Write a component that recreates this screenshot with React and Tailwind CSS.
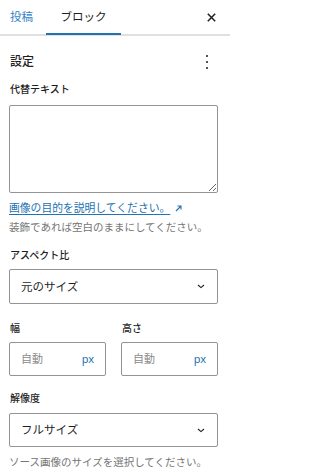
import React from "react";

const font = { fontFamily: '"Noto Sans", "Noto Sans CJK JP", sans-serif' };

function Chevron() {
  return (
    <svg width="8" height="5" viewBox="0 0 8 5" className="shrink-0">
      <path d="M1 1 L4 3.6 L7 1" fill="none" stroke="#1e1e1e" strokeWidth="1.1" />
    </svg>
  );
}

function SelectBox({ text, className }) {
  return (
    <div
      className={
        "flex h-[35px] items-center justify-between rounded-[2px] border border-[#949494] bg-white pl-[11px] pr-[12px] text-[11.5px] text-[#1e1e1e] " +
        (className || "")
      }
    >
      <span className="leading-[16px]">{text}</span>
      <Chevron />
    </div>
  );
}

function UnitInput() {
  return (
    <div className="flex h-[34px] flex-1 items-center justify-between rounded-[2px] border border-[#949494] bg-white pl-[11px] pr-[11px]">
      <span className="text-[11px] leading-[16px] text-[#8a8a8a]">自動</span>
      <span className="text-[11px] leading-[16px] text-[#2271b1]">px</span>
    </div>
  );
}

export default function App() {
  return (
    <div className="w-[230px] h-[474px] overflow-hidden bg-white text-[#1e1e1e]" style={font}>
      <div className="flex h-[36px] items-stretch border-b-2 border-[#e0e0e0]">
        <div className="flex w-[46px] items-center pl-[10px] text-[11.5px] leading-[16px] text-[#3582c4]">
          投稿
        </div>
        <div className="relative flex w-[75px] items-center justify-center text-[11.5px] leading-[16px] text-[#1e1e1e]">
          ブロック
          <div className="absolute bottom-[-1px] left-0 right-0 h-[2px] bg-[#2271b1]" />
        </div>
        <div className="flex-1" />
        <div className="flex w-[36px] items-center justify-center pr-[2px]">
          <svg width="9" height="9" viewBox="0 0 9 9">
            <path d="M0.8 0.8 L8.2 8.2 M8.2 0.8 L0.8 8.2" stroke="#1e1e1e" strokeWidth="1.5" />
          </svg>
        </div>
      </div>

      <div className="pl-[9px] pr-[12px]">
        <div className="mt-[18px] flex h-[16px] items-center justify-between">
          <span className="pl-[1px] text-[12px] font-medium leading-[16px]">設定</span>
          <svg width="4" height="16" viewBox="0 0 4 16" className="mr-[9px]">
            <circle cx="2" cy="2" r="1" fill="#1e1e1e" />
            <circle cx="2" cy="8" r="1" fill="#1e1e1e" />
            <circle cx="2" cy="14" r="1" fill="#1e1e1e" />
          </svg>
        </div>

        <div className="mt-[12px] pl-[1px] text-[10px] font-medium leading-[14px]">代替テキスト</div>
        <textarea
          className="mt-[9px] block h-[88px] w-full rounded-[2px] border border-[#949494] bg-white outline-none"
          style={{ resize: "vertical" }}
        />

        <div className="mt-[7px] flex h-[16px] items-center">
          <span className="text-[10.8px] leading-[16px] text-[#2271b1] underline underline-offset-[2px]">
            画像の目的を説明してください。
          </span>
          <svg width="7" height="7" viewBox="0 0 7 7" className="ml-[5px]">
            <path d="M1 6 L6 1 M2.5 1 L6 1 L6 4.5" fill="none" stroke="#2271b1" strokeWidth="1.1" />
          </svg>
        </div>
        <div className="mt-[3px] text-[10.5px] leading-[16px] text-[#757575]">
          装飾であれば空白のままにしてください。
        </div>

        <div className="mt-[13px] pl-[1px] text-[10px] font-medium leading-[14px]">アスペクト比</div>
        <SelectBox text="元のサイズ" className="mt-[7px]" />

        <div className="mt-[17px] flex gap-[15px]">
          <div className="flex flex-1 flex-col">
            <div className="pl-[1px] text-[10px] font-medium leading-[14px]">幅</div>
            <div className="mt-[7px] flex">
              <UnitInput />
            </div>
          </div>
          <div className="flex flex-1 flex-col">
            <div className="pl-[1px] text-[10px] font-medium leading-[14px]">高さ</div>
            <div className="mt-[7px] flex">
              <UnitInput />
            </div>
          </div>
        </div>

        <div className="mt-[15px] pl-[1px] text-[10px] font-medium leading-[14px]">解像度</div>
        <SelectBox text="フルサイズ" className="mt-[8px] !h-[34px]" />
        <div className="mt-[7px] text-[10.5px] leading-[16px] text-[#757575]">
          ソース画像のサイズを選択してください。
        </div>
      </div>
    </div>
  );
}
